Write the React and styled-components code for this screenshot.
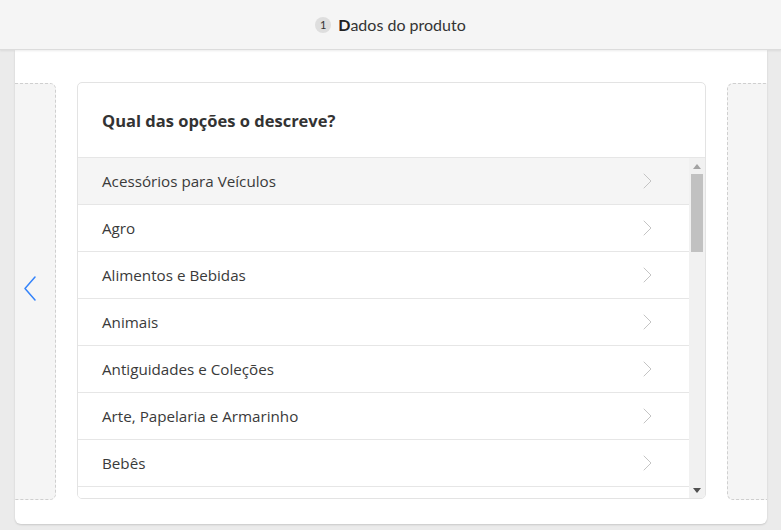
import React from "react";
import styled, { createGlobalStyle } from "styled-components";

const GlobalStyle = createGlobalStyle`
  html, body {
    margin: 0;
    padding: 0;
    background: #ebebeb;
    font-family: "Lato", "Open Sans", Arial, sans-serif;
    color: #333;
  }
  * { box-sizing: border-box; }
`;

const categories = [
  "Acessórios para Veículos",
  "Agro",
  "Alimentos e Bebidas",
  "Animais",
  "Antiguidades e Coleções",
  "Arte, Papelaria e Armarinho",
  "Bebês",
  "Beleza e Cuidado Pessoal",
];

const Page = styled.div`
  width: 781px;
  height: 530px;
  display: flex;
  flex-direction: column;
  overflow: hidden;
`;

const Header = styled.header`
  height: 50px;
  flex-shrink: 0;
  background: #f5f5f5;
  border-bottom: 1px solid #dcdcdc;
  box-shadow: 0 1px 2px rgba(0, 0, 0, 0.08);
  display: flex;
  align-items: center;
  justify-content: center;
  gap: 7px;
  font-size: 16px;
  color: #333;
  position: relative;
  z-index: 1;
`;

const StepBadge = styled.span`
  width: 16px;
  height: 16px;
  border-radius: 50%;
  background: #dedede;
  color: #333;
  font-size: 11px;
  display: flex;
  align-items: center;
  justify-content: center;
`;

const Strong = styled.b`
  font-weight: 700;
  color: #222;
`;

const Sheet = styled.main`
  margin: 0 14px 0 15px;
  height: 474px;
  background: #fff;
  border-radius: 0 0 6px 6px;
  box-shadow: 0 1px 2px rgba(0, 0, 0, 0.15);
  display: flex;
  align-items: flex-start;
  gap: 21px;
  padding-top: 32px;
`;

const SidePanel = styled.div`
  width: ${(p) => (p.side === "left" ? 41 : 40)}px;
  height: 417px;
  margin-top: 1px;
  background: #f5f5f5;
  border: 1px dashed #cfcfcf;
  ${(p) =>
    p.side === "left"
      ? "border-left: none; border-radius: 0 6px 6px 0;"
      : "border-right: none; border-radius: 6px 0 0 6px;"}
  display: flex;
  align-items: center;
  justify-content: center;
  padding-right: ${(p) => (p.side === "left" ? 10 : 0)}px;
  padding-bottom: ${(p) => (p.side === "left" ? 6 : 0)}px;
`;

const Card = styled.section`
  flex: 1;
  height: 417px;
  border: 1px solid #e3e3e3;
  border-radius: 5px;
  display: flex;
  flex-direction: column;
  overflow: hidden;
`;

const Title = styled.h2`
  margin: 0;
  height: 75px;
  flex-shrink: 0;
  padding: 0 24px;
  display: flex;
  align-items: center;
  font-family: "Open Sans", Arial, sans-serif;
  font-size: 16.5px;
  font-weight: 700;
  color: #333;
  border-bottom: 1px solid #e6e6e6;
`;

const ListArea = styled.div`
  flex: 1;
  display: flex;
  min-height: 0;
`;

const List = styled.ul`
  list-style: none;
  margin: 0;
  padding: 0;
  flex: 1;
  overflow: hidden;
`;

const Row = styled.li`
  height: 47px;
  padding: 0 37px 0 24px;
  display: flex;
  align-items: center;
  justify-content: space-between;
  font-family: "Open Sans", Arial, sans-serif;
  font-size: 15.2px;
  color: #3a3a3a;
  background: ${(p) => (p.active ? "#f5f5f5" : "#fff")};
  border-bottom: 1px solid #e6e6e6;
`;

const ScrollBar = styled.div`
  width: 16px;
  background: #f1f1f1;
  display: flex;
  flex-direction: column;
  align-items: center;
`;

const ScrollArrow = styled.div`
  height: 16px;
  display: flex;
  align-items: center;
  justify-content: center;
  color: ${(p) => p.color};
`;

const ScrollTrack = styled.div`
  flex: 1;
  width: 100%;
  padding: 0 2px;
`;

const Thumb = styled.div`
  height: 78px;
  background: #c1c1c1;
`;

const Chevron = ({ dir = "right", color, w, h, sw }) => (
  <svg width={w} height={h} viewBox={`0 0 ${w} ${h}`} fill="none">
    <polyline
      points={
        dir === "right"
          ? `1,1 ${w - 1},${h / 2} 1,${h - 1}`
          : `${w - 1},1 1,${h / 2} ${w - 1},${h - 1}`
      }
      stroke={color}
      strokeWidth={sw}
      strokeLinecap="round"
      strokeLinejoin="round"
    />
  </svg>
);

const Triangle = ({ up }) => (
  <svg width="8" height="5" viewBox="0 0 8 5">
    <polygon points={up ? "0,5 8,5 4,0" : "0,0 8,0 4,5"} fill="currentColor" />
  </svg>
);

export default function App() {
  return (
    <Page>
      <GlobalStyle />
      <Header>
        <StepBadge>1</StepBadge>
        <span>
          <Strong>D</Strong>ados do produto
        </span>
      </Header>
      <Sheet>
        <SidePanel side="left">
          <Chevron dir="left" color="#3483fa" w={12} h={25} sw={1.5} />
        </SidePanel>
        <Card>
          <Title>Qual das opções o descreve?</Title>
          <ListArea>
            <List>
              {categories.map((c, i) => (
                <Row key={c} active={i === 0}>
                  {c}
                  <Chevron color="#c4c4c4" w={9} h={16} sw={1} />
                </Row>
              ))}
            </List>
            <ScrollBar>
              <ScrollArrow color="#a3a3a3">
                <Triangle up />
              </ScrollArrow>
              <ScrollTrack>
                <Thumb />
              </ScrollTrack>
              <ScrollArrow color="#505050">
                <Triangle />
              </ScrollArrow>
            </ScrollBar>
          </ListArea>
        </Card>
        <SidePanel side="right" />
      </Sheet>
    </Page>
  );
}
